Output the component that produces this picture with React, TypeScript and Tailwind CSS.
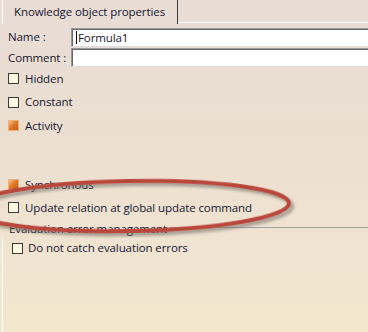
import React from "react";

const Box = ({ checked }: { checked?: boolean }) =>
  checked ? (
    <div className="w-[11px] h-[11px] shrink-0 border border-[#e9b07a] bg-[linear-gradient(135deg,#f7c48e_0%,#e27a2a_45%,#c45a14_100%)]" />
  ) : (
    <div className="w-[11px] h-[11px] shrink-0 border border-[#3a3a3a] bg-[#fdfbe1]" />
  );

const Check = ({ label, checked, h }: { label: string; checked?: boolean; h: string }) => (
  <div className={`flex items-center pl-[8px] gap-[6px] ${h}`}>
    <Box checked={checked} />
    <span>{label}</span>
  </div>
);

export default function App() {
  return (
    <div
      className="relative w-[368px] h-[332px] overflow-hidden text-[11.5px] leading-[14px] tracking-[-0.1px] text-[#161630] bg-[linear-gradient(180deg,#e8dcd5_0%,#ecdfd1_45%,#f4e7cf_100%)]"
      style={{ fontFamily: '"Open Sans", "Noto Sans", sans-serif' }}
    >
      {/* tab strip */}
      <div className="flex h-[24px]">
        <div className="ml-[2px] w-[176px] border-l border-white border-r border-r-[#3a3a3a] flex items-center pl-[11px] pb-[1px]">
          Knowledge object properties
        </div>
        <div className="flex-1 flex flex-col justify-end">
          <div className="h-px bg-white mb-px" />
        </div>
      </div>

      {/* name / comment */}
      <div className="mt-[4px] flex h-[19px]">
        <div className="w-[71px] pl-[8px] flex items-center pb-px">Name :</div>
        <div className="flex-1 bg-white border-t border-l border-[#9a9a9a] border-b border-b-[#dedede] shadow-[inset_1px_1px_0_#6a6a6a] flex items-center pl-[4px]">
          <span className="w-px h-[13px] bg-[#101010] mr-px" />
          <span>Formula1</span>
        </div>
      </div>
      <div className="mt-px flex h-[19px]">
        <div className="w-[71px] pl-[8px] flex items-center">Comment :</div>
        <div className="flex-1 bg-white border-t border-l border-[#9a9a9a] border-b border-b-[#dedede] shadow-[inset_1px_1px_0_#6a6a6a]" />
      </div>

      {/* checkboxes */}
      <Check label="Hidden" h="h-[23px]" />
      <Check label="Constant" h="h-[24px]" />
      <Check label="Activity" checked h="h-[23px]" />
      <div className="h-[36px]" />
      <Check label="Synchronous" checked h="h-[23px]" />
      <Check label="Update relation at global update command" h="h-[23px]" />

      {/* group box */}
      <div className="mt-[2px] flex h-[16px] items-center">
        <span className="pl-[9px] pr-[3px]">Evaluation error management</span>
        <div className="flex-1 self-start mt-[6px] h-px bg-[#a3a3a3]" />
      </div>
      <div className="ml-[2px] border-l border-white h-[120px]">
        <div className="flex items-center pl-[9px] gap-[5px] h-[22px]">
          <Box />
          <span>Do not catch evaluation errors</span>
        </div>
      </div>

      {/* red annotation ellipse */}
      <svg className="absolute left-0 top-0 pointer-events-none" width="368" height="332">
        <defs>
          <filter id="sh" x="-20%" y="-50%" width="140%" height="200%">
            <feDropShadow dx="3" dy="3" stdDeviation="1.8" floodColor="#6b6a60" floodOpacity="0.6" />
          </filter>
        </defs>
        <ellipse
          cx="129"
          cy="206"
          rx="160"
          ry="25"
          fill="none"
          stroke="#b9473b"
          strokeWidth="4"
          transform="rotate(-1 129 206)"
          filter="url(#sh)"
        />
      </svg>
    </div>
  );
}
